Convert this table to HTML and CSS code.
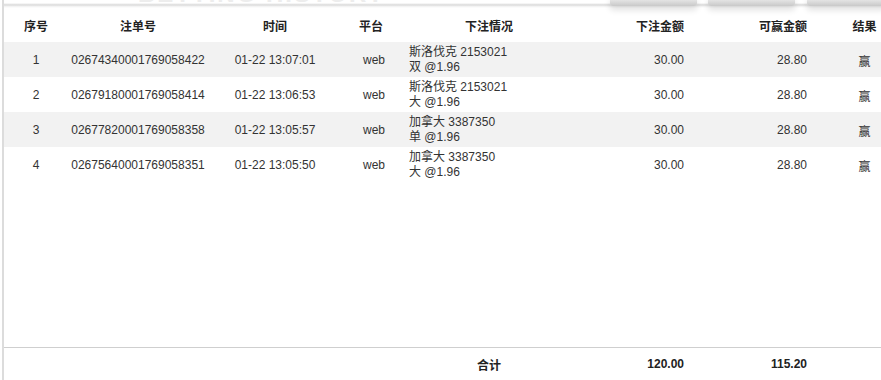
FILE: index.html
```html
<!DOCTYPE html>
<html lang="zh">
<head>
<meta charset="utf-8">
<link rel="stylesheet" href="styles.css">
</head>
<body>
<div class="panel">
  <div class="topbar">
    <div class="watermark">BETTING HISTORY</div>
    <div class="tab t1"></div>
    <div class="tab t2"></div>
    <div class="tab t3"></div>
  </div>
  <table class="grid">
    <colgroup>
      <col class="c-no"><col class="c-id"><col class="c-time"><col class="c-plat"><col class="c-info"><col class="c-amt"><col class="c-win"><col class="c-res">
    </colgroup>
    <thead>
      <tr>
        <th class="ctr">序号</th>
        <th class="ctr">注单号</th>
        <th class="ctr">时间</th>
        <th class="ctr">平台</th>
        <th class="ctr">下注情况</th>
        <th class="num">下注金额</th>
        <th class="num win">可赢金额</th>
        <th class="ctr">结果</th>
      </tr>
    </thead>
    <tbody>
      <tr class="alt">
        <td class="ctr">1</td><td class="ctr">02674340001769058422</td><td class="ctr">01-22 13:07:01</td><td class="ctr plat">web</td>
        <td class="info">斯洛伐克 2153021<br>双 @1.96</td><td class="num">30.00</td><td class="num win">28.80</td><td class="ctr">赢</td>
      </tr>
      <tr>
        <td class="ctr">2</td><td class="ctr">02679180001769058414</td><td class="ctr">01-22 13:06:53</td><td class="ctr plat">web</td>
        <td class="info">斯洛伐克 2153021<br>大 @1.96</td><td class="num">30.00</td><td class="num win">28.80</td><td class="ctr">赢</td>
      </tr>
      <tr class="alt">
        <td class="ctr">3</td><td class="ctr">02677820001769058358</td><td class="ctr">01-22 13:05:57</td><td class="ctr plat">web</td>
        <td class="info">加拿大 3387350<br>单 @1.96</td><td class="num">30.00</td><td class="num win">28.80</td><td class="ctr">赢</td>
      </tr>
      <tr>
        <td class="ctr">4</td><td class="ctr">02675640001769058351</td><td class="ctr">01-22 13:05:50</td><td class="ctr plat">web</td>
        <td class="info">加拿大 3387350<br>大 @1.96</td><td class="num">30.00</td><td class="num win">28.80</td><td class="ctr">赢</td>
      </tr>
      <tr class="spacer"><td colspan="8"></td></tr>
    </tbody>
    <tfoot>
      <tr>
        <td></td><td></td><td></td><td></td>
        <td class="ctr">合计</td><td class="num">120.00</td><td class="num win">115.20</td><td></td>
      </tr>
    </tfoot>
  </table>
</div>
</body>
</html>
```
FILE: styles.css
```css
html, body {
  margin: 0;
  padding: 0;
  background: #fff;
}
body {
  font-family: "Liberation Sans", "Noto Sans CJK SC", sans-serif;
  font-size: 12px;
  color: #333;
  width: 881px;
  height: 380px;
  overflow: hidden;
}
.panel {
  margin-left: 2px;
  border-left: 2px solid #dcdcdc;
  height: 380px;
  position: relative;
}
.topbar {
  position: relative;
  height: 8px;
}
.topbar::before {
  content: "";
  position: absolute;
  left: 0;
  right: 0;
  top: 0;
  height: 8px;
  background: linear-gradient(to bottom, #fff 0, #fff 3px, #d8d8d8 5px, #efefef 6px, #fff 8px);
}
.watermark {
  position: absolute;
  left: 134px;
  top: -20px;
  font-family: "Liberation Sans", sans-serif;
  font-weight: bold;
  font-size: 24px;
  letter-spacing: 2px;
  color: #ededed;
  white-space: nowrap;
}
.tab {
  position: absolute;
  top: -4px;
  height: 10px;
  background: linear-gradient(to bottom, #f6f6f6, #c9c9c9);
  box-shadow: 0 4px 6px rgba(0, 0, 0, 0.12);
  border-radius: 0 0 3px 3px;
}
.t1 { left: 606px; width: 87px; }
.t2 { left: 704px; width: 87px; }
.t3 { left: 803px; width: 80px; }

.grid {
  width: 877px;
  border-collapse: collapse;
  table-layout: fixed;
}
.c-no { width: 64px; }
.c-id { width: 140px; }
.c-time { width: 134px; }
.c-plat { width: 58px; }
.c-info { width: 178px; }
.c-amt { width: 121px; }
.c-win { width: 149px; }
.c-res { width: 33px; }

th {
  height: 34px;
  font-weight: bold;
  color: #222;
  font-size: 12px;
  padding: 0;
  vertical-align: middle;
}
td {
  height: 34px;
  padding: 1px 0 0 0;
  vertical-align: middle;
  white-space: nowrap;
}
.ctr { text-align: center; }
.num { text-align: right; padding-right: 15px; }
.num.win { padding-right: 41px; }
.plat { padding-left: 6px; }
.info {
  text-align: left;
  padding-left: 9px;
  line-height: 15px;
}
tr.alt td { background: #f2f2f2; }
tr.spacer td { height: 165px; padding: 0; }
tfoot td {
  border-top: 1px solid #cfcfcf;
  font-weight: bold;
  color: #222;
  height: 30px;
}
```
